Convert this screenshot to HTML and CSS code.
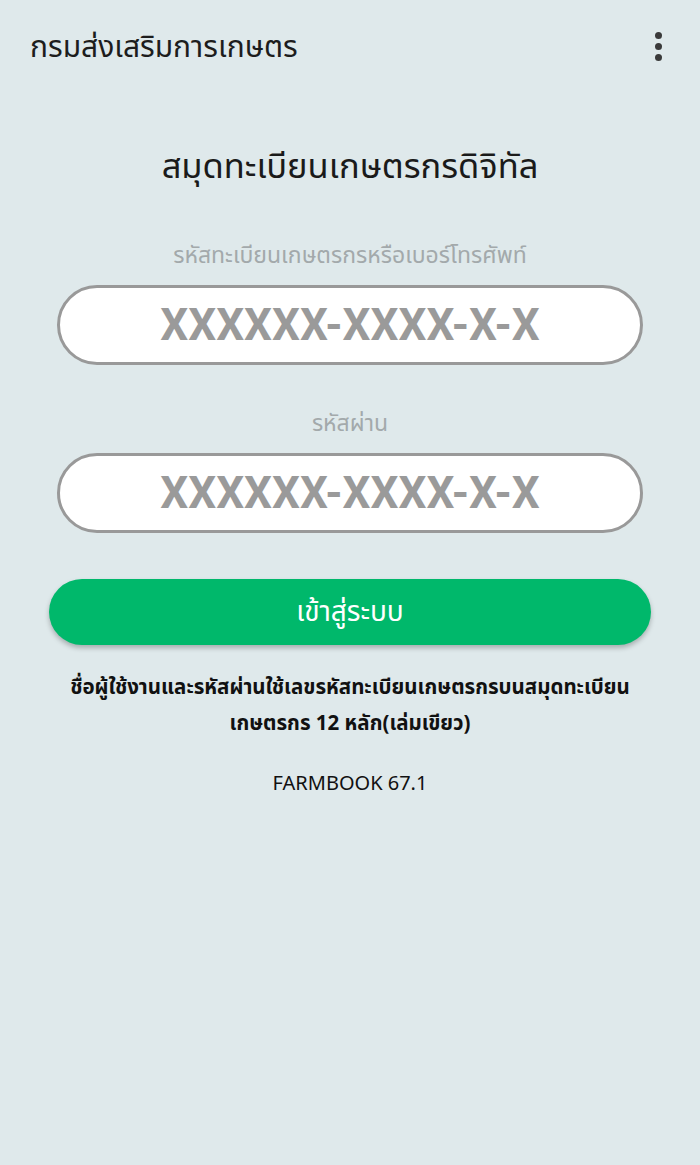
FILE: index.html
```html
<!DOCTYPE html>
<html lang="th">
<head>
<meta charset="utf-8">
<title>Farmbook</title>
<link rel="stylesheet" href="styles.css">
</head>
<body>
<div class="app">
  <header class="appbar">
    <div class="appbar-title">กรมส่งเสริมการเกษตร</div>
    <div class="menu" aria-label="menu">
      <span class="dot"></span><span class="dot"></span><span class="dot"></span>
    </div>
  </header>
  <main class="content">
    <h1 class="heading">สมุดทะเบียนเกษตรกรดิจิทัล</h1>
    <label class="label" for="user">รหัสทะเบียนเกษตรกรหรือเบอร์โทรศัพท์</label>
    <input class="field" id="user" type="text" placeholder="XXXXXX-XXXX-X-X">
    <label class="label label-2" for="pass">รหัสผ่าน</label>
    <input class="field" id="pass" type="text" placeholder="XXXXXX-XXXX-X-X">
    <button class="login" type="button">เข้าสู่ระบบ</button>
    <p class="note">ชื่อผู้ใช้งานและรหัสผ่านใช้เลขรหัสทะเบียนเกษตรกรบนสมุดทะเบียน<br>เกษตรกร 12 หลัก(เล่มเขียว)</p>
    <p class="version">FARMBOOK 67.1</p>
  </main>
</div>
</body>
</html>
```
FILE: styles.css
```css
html, body {
  margin: 0;
  padding: 0;
}
body {
  background: #dfe9eb;
  font-family: "Noto Sans Thai", "Noto Sans", "DejaVu Sans", sans-serif;
  color: #1a1a1a;
}
.app {
  width: 700px;
  min-height: 1165px;
}
.appbar {
  height: 96px;
  display: flex;
  align-items: center;
  justify-content: space-between;
  padding: 0 38px 0 30px;
  box-sizing: border-box;
}
.appbar-title {
  font-size: 30px;
  line-height: 40px;
  color: #1d1d1d;
}
.menu {
  display: flex;
  flex-direction: column;
  gap: 4px;
  margin-top: -4px;
}
.dot {
  width: 7px;
  height: 7px;
  border-radius: 50%;
  background: #3a3a3a;
}
.content {
  display: flex;
  flex-direction: column;
  align-items: center;
}
.heading {
  margin: 48px 0 0;
  font-size: 34.5px;
  font-weight: 400;
  color: #1a1a1a;
  line-height: 48px;
}
.label {
  margin-top: 49px;
  font-size: 23px;
  color: #a3a9ab;
  line-height: 30px;
}
.label-2 {
  margin-top: 44px;
}
.field {
  margin-top: 14px;
  width: 586px;
  height: 80px;
  box-sizing: border-box;
  border: 3px solid #999;
  border-radius: 40px;
  background: #fff;
  text-align: center;
  font-family: Roboto, "Liberation Sans", Arial, sans-serif;
  font-weight: 700;
  font-size: 44px;
  color: #9a9a9a;
  outline: none;
  padding: 0;
}
.field::placeholder {
  color: #9a9a9a;
  opacity: 1;
}
.login {
  margin-top: 46px;
  width: 602px;
  height: 66px;
  border: none;
  border-radius: 33px;
  background: #00b86b;
  color: #fff;
  font-family: inherit;
  font-size: 28px;
  box-shadow: 0 3px 5px rgba(0, 0, 0, 0.25);
}
.note {
  margin: 25px 0 0;
  font-size: 20.5px;
  font-weight: 700;
  text-align: center;
  line-height: 36px;
  color: #111;
}
.version {
  margin: 27px 0 0;
  font-size: 20px;
  line-height: 30px;
  color: #111;
}
```
